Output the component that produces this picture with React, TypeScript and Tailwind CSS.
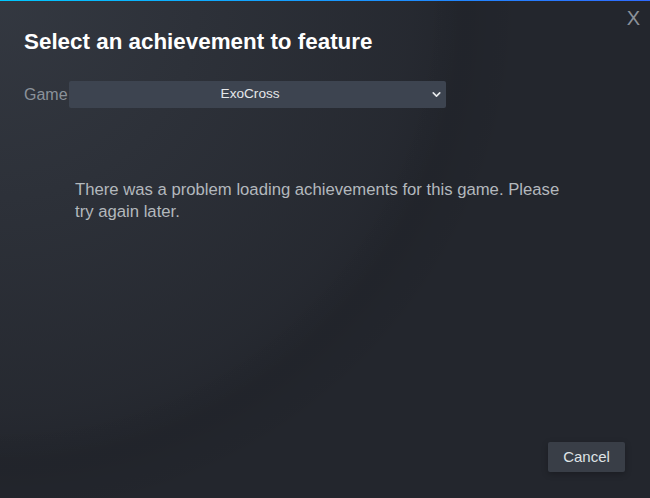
import React from "react";
import { ChevronDown } from "lucide-react";

export default function App() {
  return (
    <div className="relative flex h-[498px] w-[650px] flex-col overflow-hidden bg-[#23262d] font-['Liberation_Sans',Arial,sans-serif]">
      {/* soft light in the top-left corner, with the faint darker ring at its edge */}
      <div className="pointer-events-none absolute inset-0 bg-[radial-gradient(circle_at_top_left,rgba(74,81,92,0.42)_0%,rgba(75,81,92,0.08)_50%,rgba(75,81,92,0)_56%)]" />
      <div className="pointer-events-none absolute inset-0 bg-[radial-gradient(circle_at_top_left,rgba(0,0,0,0)_52%,rgba(0,0,0,0.05)_57%,rgba(0,0,0,0)_64%)]" />
      <div className="relative h-px w-full bg-[linear-gradient(90deg,#00c8ff_0%,#2f6bff_100%)]" />

      <button className="absolute right-[10px] top-[8px] text-[20px] leading-none text-[#8b9199]">
        X
      </button>

      <div className="relative flex flex-1 flex-col px-6">
        <h1 className="mt-[27px] text-[22.4px] font-bold leading-[28px] text-white">
          Select an achievement to feature
        </h1>

        <div className="mt-[25px] flex items-center">
          <span className="text-[16px] text-[#8b929a]">Game</span>
          <div className="relative ml-px flex h-[27px] w-[377px] items-center justify-center rounded-[2px] bg-[#3d4450] pr-[14px] text-[13.6px] text-[#e6e8ea]">
            ExoCross
            <ChevronDown size={13} strokeWidth={3} className="absolute right-[3px] text-[#e6e8ea]" />
          </div>
        </div>

        <p className="ml-[51px] mt-[71px] w-[492px] text-[16.7px] leading-[22px] text-[#b3b8bd]">
          There was a problem loading achievements for this game. Please try again later.
        </p>

        <div className="flex-1" />

        <div className="mb-[26px] mr-px flex justify-end">
          <button className="h-[30px] w-[77px] rounded-[2px] bg-[#393e47] text-[15px] text-[#dfe3e6] shadow-[0_2px_6px_rgba(0,0,0,0.25)]">
            Cancel
          </button>
        </div>
      </div>
    </div>
  );
}
